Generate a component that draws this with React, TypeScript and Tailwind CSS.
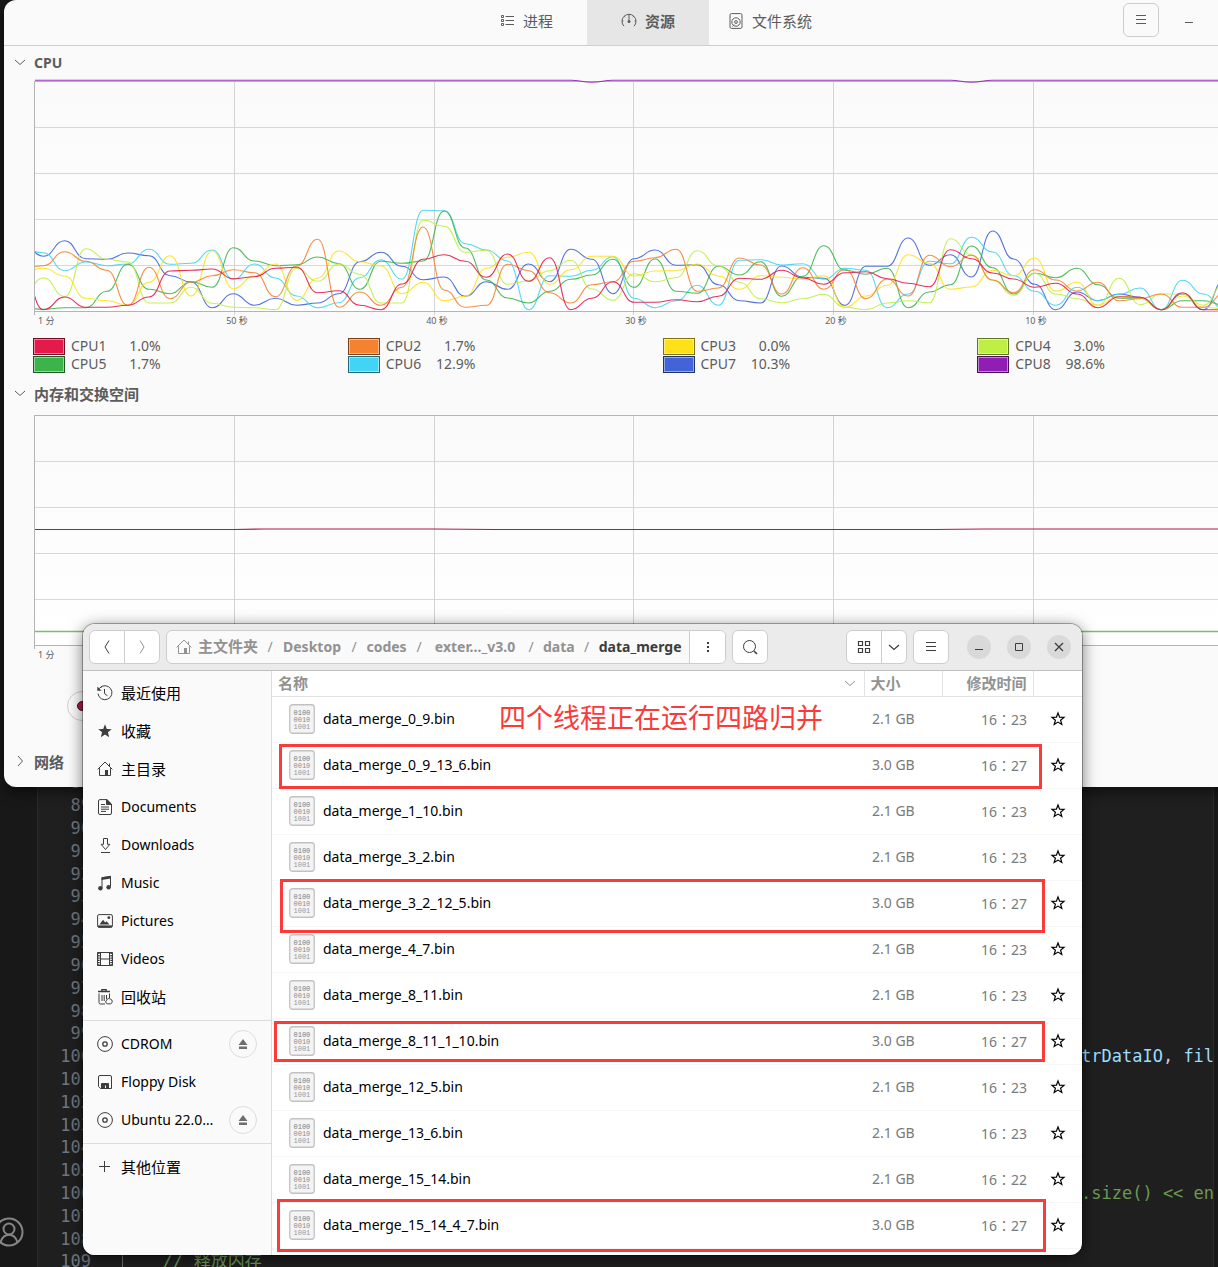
import React from 'react';

const LATIN = "font-['Noto_Sans','Noto_Sans_CJK_SC',sans-serif]";
const MONO = "font-['DejaVu_Sans_Mono','Noto_Sans_CJK_SC',monospace]";

type Series = { name: string; value: string; color: string; edge: string; points: number[] };

/* Heights are in thirds of a pixel, measured downwards; 394 is the zero line. */
const SERIES: Series[] = [
  {
    name: 'CPU1', value: '1.0%', color: '#e6194b', edge: '#730c25',
    points: [270, 389, 351, 382, 382, 376, 351, 273, 271, 267, 296, 290, 265, 262, 338, 332, 376, 389, 312, 238, 224, 244, 292, 222, 304, 233, 389, 355, 305, 367, 367, 359, 365, 349, 295, 298, 271, 294, 313, 278, 275, 296, 310, 320, 209, 236, 279, 297, 322, 310, 342, 383, 350, 352, 389, 338, 389, 389],
  },
  {
    name: 'CPU2', value: '1.7%', color: '#f58231', edge: '#7a4118',
    points: [265, 257, 215, 244, 271, 376, 262, 356, 307, 287, 269, 278, 350, 258, 178, 382, 336, 376, 322, 141, 330, 382, 376, 253, 272, 338, 369, 314, 305, 244, 233, 208, 334, 324, 234, 255, 342, 263, 328, 268, 356, 297, 348, 226, 260, 226, 300, 338, 269, 300, 333, 307, 362, 356, 342, 382, 382, 340],
  },
  {
    name: 'CPU3', value: '0.0%', color: '#ffe119', edge: '#80700c',
    points: [275, 265, 288, 355, 362, 376, 307, 227, 348, 213, 326, 288, 252, 361, 294, 213, 245, 258, 341, 307, 362, 349, 265, 232, 217, 313, 269, 229, 229, 288, 273, 272, 252, 288, 328, 287, 292, 298, 287, 382, 348, 316, 224, 250, 328, 321, 271, 287, 234, 334, 307, 376, 348, 355, 389, 348, 382, 386],
  },
  {
    name: 'CPU4', value: '3.0%', color: '#bfef45', edge: '#5f7722',
    points: [350, 293, 350, 206, 238, 246, 369, 369, 322, 370, 382, 383, 389, 265, 304, 252, 283, 369, 369, 120, 139, 217, 211, 313, 302, 272, 241, 327, 361, 281, 305, 293, 212, 258, 307, 356, 368, 356, 343, 382, 389, 369, 362, 368, 176, 224, 300, 346, 280, 342, 356, 376, 295, 374, 342, 342, 376, 310],
  },
  {
    name: 'CPU5', value: '1.7%', color: '#3cb44b', edge: '#1e5a25',
    points: [384, 388, 383, 383, 334, 253, 328, 341, 305, 322, 203, 243, 257, 254, 231, 251, 328, 244, 250, 243, 93, 204, 300, 354, 369, 334, 298, 285, 238, 322, 237, 334, 340, 259, 285, 245, 349, 289, 197, 271, 283, 265, 383, 336, 314, 198, 263, 342, 280, 293, 265, 314, 355, 355, 389, 362, 362, 376],
  },
  {
    name: 'CPU6', value: '12.9%', color: '#42d4f4', edge: '#216a7a',
    points: [208, 218, 272, 246, 257, 252, 208, 253, 250, 210, 298, 252, 294, 348, 383, 368, 293, 239, 298, 91, 92, 191, 210, 243, 389, 287, 289, 271, 230, 355, 383, 362, 316, 376, 241, 239, 255, 251, 298, 265, 271, 383, 342, 244, 251, 172, 216, 287, 334, 376, 322, 362, 343, 324, 389, 301, 342, 389],
  },
  {
    name: 'CPU7', value: '10.3%', color: '#4363d8', edge: '#21316c',
    points: [190, 229, 182, 236, 238, 219, 227, 287, 306, 383, 341, 376, 355, 376, 369, 341, 245, 217, 259, 299, 291, 349, 305, 328, 252, 305, 208, 238, 341, 236, 210, 256, 254, 314, 362, 369, 258, 292, 295, 376, 259, 259, 174, 256, 224, 291, 153, 237, 313, 389, 336, 362, 342, 352, 389, 342, 389, 300],
  },
  {
    name: 'CPU8', value: '98.6%', color: '#911eb4', edge: '#480f5a',
    points: Array.from({ length: 58 }, (_, i) => (i === 27 || i === 45 ? -293 : -299)),
  },
];

const STEP = 21.09;

function curve(points: number[]): string {
  const at = (i: number) => [i * STEP - 11.6, points[i] / 3 + 101];
  let d = '';
  points.forEach((_, i) => {
    const [x, y] = at(i);
    if (i === 0) {
      d = `M${x.toFixed(1)} ${y.toFixed(1)}`;
      return;
    }
    const [px, py] = at(i - 1);
    const mid = ((px + x) / 2).toFixed(1);
    d += ` C${mid} ${py.toFixed(1)} ${mid} ${y.toFixed(1)} ${x.toFixed(1)} ${y.toFixed(1)}`;
  });
  return d;
}

const TICKS = ['50 秒', '40 秒', '30 秒', '20 秒', '10 秒'];
const TICK_X = [200, 400, 599, 799, 999];

function Chart({ id, label, ticks = [], children }: { id: string; label: string; ticks?: string[]; children: React.ReactNode }) {
  return (
    <svg width="1230" height="252" viewBox="0 0 1230 252" role="img" aria-label={label} className="block shrink-0">
      <defs>
        <linearGradient id={`${id}-bg`} x1="0" y1="0" x2="0" y2="1">
          <stop offset="0" stopColor="#fafafa" />
          <stop offset="1" stopColor="#ffffff" />
        </linearGradient>
        <clipPath id={`${id}-clip`}>
          <rect x="1" y="0" width="1229" height="234" />
        </clipPath>
      </defs>
      <rect x="0" y="2" width="1230" height="230" fill={`url(#${id}-bg)`} />
      <g fill="none" strokeWidth="1" shapeRendering="crispEdges">
        {[48, 94, 140, 186].map((y) => (
          <path key={y} d={`M0 ${y + 0.5}H1230`} stroke="#d8d8d8" />
        ))}
        {TICK_X.map((x) => (
          <path key={x} d={`M${x + 0.5} 2V236`} stroke="#d4d4d4" />
        ))}
        <path d="M1230 2.5H0.5V236M0 232.5H1230" stroke="#b4b4b7" />
      </g>
      <g clipPath={`url(#${id}-clip)`} fill="none" strokeWidth="1.1">
        {children}
      </g>
      <g className={LATIN} fontSize="9" fill="#5f5f5f">
        <text x="4" y="245">1 分</text>
        {ticks.map((t, i) => (
          <text key={t} x={TICK_X[i] + 3} y="245" textAnchor="middle">{t}</text>
        ))}
      </g>
    </svg>
  );
}

function Icon({ children, size = 16, className = '' }: { children: React.ReactNode; size?: number; className?: string }) {
  return (
    <svg width={size} height={size} viewBox="0 0 16 16" fill="none" stroke="currentColor" strokeWidth="1" aria-hidden="true" className={`shrink-0 ${className}`}>
      {children}
    </svg>
  );
}

const HomeShape = () => (
  <>
    <path d="M.6 8.4 8 1l7.4 7.4M12.5 2.5v2.8M2.5 7.2v7.3h11V7.2" />
    <path d="M8 9h3v6H8z" fill="currentColor" stroke="none" />
  </>
);

const DiscShape = () => (
  <>
    <circle cx="8" cy="8" r="7.4" />
    <circle cx="8" cy="8" r="2.2" strokeWidth="1.3" />
  </>
);

const PLACES: { name: string; cjk?: boolean; icon: React.ReactNode }[] = [
  {
    name: '最近使用', cjk: true,
    icon: (
      <>
        <path d="M2.6 3.2A7 7 0 1 1 1 8.6M7.5 4v4.6l3 2.2" />
        <path d="M.3 1.6v4.2h4.3z" fill="currentColor" stroke="none" />
        <path d="M5 1.7c-1 .4-1.8.9-2.6 1.7" strokeDasharray="1 1" />
      </>
    ),
  },
  {
    name: '收藏', cjk: true,
    icon: <path d="m8 1.2 1.8 4.7 5 .3-3.9 3.1 1.3 4.9L8 11.5l-4.2 2.7 1.3-4.9-3.9-3.1 5-.3z" fill="currentColor" stroke="none" />,
  },
  { name: '主目录', cjk: true, icon: <HomeShape /> },
  {
    name: 'Documents',
    icon: (
      <>
        <path d="M10 .6H3A1.5 1.5 0 0 0 1.5 2v12A1.5 1.5 0 0 0 3 15.5h10a1.5 1.5 0 0 0 1.5-1.5V5z" />
        <path d="M9.5.6V5.5h5z" fill="currentColor" />
        <path d="M4 5.5h4M4 8h8M4 10.2h8M4 12.4h5" />
      </>
    ),
  },
  {
    name: 'Downloads',
    icon: <path d="M6.5 1.5h4v5.8h2.4L8.5 12.5 4.1 7.3h2.4zM4 15.5h9" />,
  },
  {
    name: 'Music',
    icon: (
      <>
        <path d="M5 13V2.8L13.5 1.5V11.5" />
        <path d="M4.5 2.3 14 .8v2.8L4.5 5z" fill="currentColor" stroke="none" />
        <circle cx="3.4" cy="13.2" r="2.2" fill="currentColor" stroke="none" />
        <circle cx="11.6" cy="12.2" r="2.2" fill="currentColor" stroke="none" />
      </>
    ),
  },
  {
    name: 'Pictures',
    icon: (
      <>
        <rect x=".6" y="1.6" width="14.8" height="12.8" rx="1.5" />
        <path d="m2.5 11.5 3.5-4.8 2.2 2.8 1.3-1.3 3 3.3z" fill="currentColor" stroke="none" />
        <path d="M1 13.3h14" strokeWidth="1.8" />
        <circle cx="11.8" cy="4.7" r="1.4" fill="currentColor" stroke="none" />
      </>
    ),
  },
  {
    name: 'Videos',
    icon: (
      <>
        <path d="M1.5 1.8v12.7M14.5 1.8v12.7" strokeWidth="2.4" strokeDasharray="1.3 1" />
        <path d="M.5 1.5h15v13H.5zM3.5 1.5v13M12.5 1.5v13M3.5 8h9" />
      </>
    ),
  },
  {
    name: '回收站', cjk: true,
    icon: (
      <>
        <path d="M1 2.5h12M5 2V.6h4V2" strokeWidth="1.5" />
        <path d="M2 4.5v9A1.5 1.5 0 0 0 3.5 15H8M12.5 4.5V9M5 6v6M7.2 6v6M9.5 6v4" />
        <path d="M10.5 14.8a2 2 0 0 1-.6-3.8 2 2 0 0 1 3.3-1 2.5 2.5 0 0 1 .4 4.8z" />
      </>
    ),
  },
];

const DEVICES = [
  { name: 'CDROM', eject: true, disc: true },
  { name: 'Floppy Disk', eject: false, disc: false },
  { name: 'Ubuntu 22.0…', eject: true, disc: true },
];

const FILES = [
  { name: 'data_merge_0_9.bin', size: '2.1 GB', hour: '16', minute: '23' },
  { name: 'data_merge_0_9_13_6.bin', size: '3.0 GB', hour: '16', minute: '27' },
  { name: 'data_merge_1_10.bin', size: '2.1 GB', hour: '16', minute: '23' },
  { name: 'data_merge_3_2.bin', size: '2.1 GB', hour: '16', minute: '23' },
  { name: 'data_merge_3_2_12_5.bin', size: '3.0 GB', hour: '16', minute: '27' },
  { name: 'data_merge_4_7.bin', size: '2.1 GB', hour: '16', minute: '23' },
  { name: 'data_merge_8_11.bin', size: '2.1 GB', hour: '16', minute: '23' },
  { name: 'data_merge_8_11_1_10.bin', size: '3.0 GB', hour: '16', minute: '27' },
  { name: 'data_merge_12_5.bin', size: '2.1 GB', hour: '16', minute: '23' },
  { name: 'data_merge_13_6.bin', size: '2.1 GB', hour: '16', minute: '23' },
  { name: 'data_merge_15_14.bin', size: '2.1 GB', hour: '16', minute: '22' },
  { name: 'data_merge_15_14_4_7.bin', size: '3.0 GB', hour: '16', minute: '27' },
];

const CRUMBS = [
  { name: 'Desktop', width: 'min-w-[60px]' },
  { name: 'codes', width: 'min-w-[41px]' },
  { name: 'exter…_v3.0', width: 'min-w-[88px]' },
  { name: 'data', width: 'min-w-[31px]' },
];

const LINES = Array.from({ length: 22 }, (_, i) => 88 + i);

function Editor() {
  return (
    <div className="flex h-full bg-[#1f1f1f]">
      <div className="flex w-[38px] shrink-0 flex-col items-start justify-end border-r border-[#2b2b2b] bg-[#181818] pb-5">
        <svg width="24" height="30" viewBox="-15 -15 24 30" fill="none" stroke="#868686" strokeWidth="2" aria-hidden="true">
          <circle cx="-6" cy="0" r="13.5" />
          <circle cx="-6" cy="-3" r="5.5" />
          <path d="M-14.500 10.5C-13 5.5-10 2.8-6 2.8S1 5.5 2.5 10.5" />
        </svg>
      </div>
      <div className="flex min-w-0 flex-1 flex-col justify-end overflow-hidden">
        <div className={`-mb-[6px] flex h-[502px] flex-col text-[17px] leading-[22px] whitespace-pre ${MONO}`}>
          {LINES.map((n) => (
            <div key={n} className="flex min-h-0 flex-1 items-center">
              <span className="w-[53px] shrink-0 text-right text-[#6e7681]">{n}</span>
              {n === 100 && <span className="pl-[990px] text-[#9cdcfe]">trDataIO<span className="text-[#cccccc]">, </span>fil</span>}
              {n === 106 && <span className="pl-[990px] text-[#6a9955]">.size() &lt;&lt; en</span>}
              {n === 109 && (
                <span className="ml-[31px] border-l border-[#707070] pl-[40px] text-[#6a9955]">
                  <i>// </i><span className="text-[17px]">释放内存</span>
                </span>
              )}
            </div>
          ))}
        </div>
      </div>
      <div className="w-[5px] shrink-0 border-l border-[#2a2a2a] bg-[#181818]" />
    </div>
  );
}

function Heading({ children, open = true, cjk = true }: { children: React.ReactNode; open?: boolean; cjk?: boolean }) {
  return (
    <button type="button" className={`flex h-6 items-center gap-2 pl-2 font-bold text-[#5c5c5c] ${cjk ? 'text-[15px]' : 'text-sm'}`}>
      <Icon className="-translate-y-px text-[#5c5c5c]">{open ? <path d="m3 6 5 4.500L13 6" /> : <path d="m6 3 4.500 5L6 13" />}</Icon>
      <span className="-ml-0.5">{children}</span>
    </button>
  );
}

function Tab({ label, active, children }: { label: string; active?: boolean; children: React.ReactNode }) {
  return (
    <button
      type="button"
      role="tab"
      aria-selected={!!active}
      className={`flex w-[122px] items-center justify-center gap-2 pb-0.5 text-[15px] text-[#5c5c5c] ${active ? 'bg-[#e6e6e6] font-bold' : ''}`}
    >
      <Icon className="-translate-y-px">{children}</Icon>
      {label}
    </button>
  );
}

function Monitor() {
  return (
    <section aria-label="System monitor" className="absolute top-0 -right-[74px] left-1 h-[787px] overflow-hidden rounded-xl bg-[#fafafa] shadow-[0_4px_14px_rgba(0,0,0,0.6)]">
      <header className="flex h-[46px] border-b border-[#cfcfcf]">
        <div className="flex-1 pl-[11px]" />
        <div role="tablist" className="flex">
          <Tab label="进程">
            <path d="M2.5 2.5h2v2h-2zM2.5 6.5h2v2h-2zM2.5 10.5h2v2h-2zM6.5 3.5H15M6.5 7.5H15M6.5 11.5H15" />
          </Tab>
          <Tab label="资源" active>
            <path d="M3 13.2A7 7 0 1 1 13 13.2" />
            <path d="M8 1v7M3.200 3.200l1 1M12.8 3.200l-1 1M1 8h1.400M15 8h-1.400" />
            <circle cx="8" cy="8.500" r="1.500" fill="currentColor" stroke="none" />
          </Tab>
          <Tab label="文件系统">
            <rect x="2" y=".6" width="12" height="14.8" rx="1.5" />
            <circle cx="8" cy="9" r="4.2" />
            <circle cx="8" cy="9" r="1.4" />
            <path d="m4.500 13.500 1.800-1.800" />
          </Tab>
        </div>
        <div className="flex flex-1 items-center justify-end gap-4 pr-[11px] pb-[6px] text-[#5c5c5c]">
          <button type="button" aria-label="Menu" className="mr-0.5 flex h-[34px] w-9 items-center justify-center rounded-md border border-[#cdcdcd]">
            <Icon><path d="M3 3.5h10M3 7.5h10M3 11.5h10" /></Icon>
          </button>
          <button type="button" aria-label="Minimize" className="flex size-6 items-center justify-center pt-1">
            <Icon><path d="M4 8.5h8" /></Icon>
          </button>
          <button type="button" aria-label="Maximize" className="size-6" />
          <button type="button" aria-label="Close" className="size-6" />
        </div>
      </header>
      <div className="pt-[5px]"><Heading cjk={false}>CPU</Heading></div>
      <div className="mt-1 pl-[30px]">
        <Chart id="cpu" label="CPU history" ticks={TICKS}>
          {SERIES.slice().reverse().map((s) => (
            <path key={s.name} d={curve(s.points)} stroke={s.color} strokeOpacity="0.9" />
          ))}
        </Chart>
      </div>
      <dl className="mt-1.5 grid grid-cols-4 pl-[29px] text-sm leading-[18px] text-[#5c5c5c]">
        {SERIES.map((s) => (
          <div key={s.name} className="flex h-[18px] items-center">
            <dt className="flex items-center gap-1.5">
              <span className="h-[17px] w-8 border p-px" style={{ borderColor: s.edge }}>
                <span className="block h-full outline" style={{ background: s.color, outlineColor: `color-mix(in srgb, ${s.color} 55%, white)` }} />
              </span>
              {s.name}
            </dt>
            <dd className="w-[54px] text-right">{s.value}</dd>
          </div>
        ))}
      </dl>
      <div className="mt-[9px]"><Heading>内存和交换空间</Heading></div>
      <div className="mt-[7px] pl-[30px]">
        <Chart id="mem" label="Memory history">
          <path d="M0 116.500H200L230 116H400L460 116.500H900L950 116H1230" stroke="#ab1852" />
          <path d="M0 218.500H1230" stroke="#79c06a" strokeWidth="1.500" />
        </Chart>
      </div>
      <div className="mt-[26px] ml-[63px] flex size-[30px] items-center justify-center rounded-full border border-[#cfcfcf]">
        <span className="size-2.5 rounded-full border border-[#4a0a25] bg-[#ab1852]" />
      </div>
      <div className="mt-[29px]"><Heading open={false}>网络</Heading></div>
    </section>
  );
}

const WIN_BTN = 'flex size-6 items-center justify-center rounded-full bg-[#d9d9d9] text-[#3d3d3d]';
const BOX = 'pointer-events-none absolute border-[3px] border-[#fb3a3a]';

function Files() {
  return (
    <section aria-label="Files" className="absolute top-[624px] right-[136px] left-[83px] flex h-[631px] flex-col overflow-hidden rounded-xl bg-white shadow-[0_0_0_1px_rgba(0,0,0,0.3),0_3px_16px_rgba(0,0,0,0.55)]">
      <header className="flex h-[47px] shrink-0 items-center border-b border-[#c0c0c0] bg-[#ebebeb] px-1.5 text-[#3d3d3d]">
        <div className="flex h-[34px] w-[71px] shrink-0 overflow-hidden rounded-md border border-[#cdcdcd] bg-white">
          <button type="button" aria-label="Back" className="flex flex-1 items-center justify-center border-r border-[#cdcdcd]">
            <Icon><path d="M10 1.5 6 8l4 6.5" /></Icon>
          </button>
          <button type="button" aria-label="Forward" className="flex flex-1 items-center justify-center text-[#929292]">
            <Icon><path d="m6 1.5 4 6.5-4 6.5" /></Icon>
          </button>
        </div>
        <nav aria-label="Path" className="ml-1.5 flex h-[34px] w-[560px] shrink-0 items-center overflow-hidden rounded-md border border-[#cdcdcd] bg-[#fafafa] pl-[9px] text-sm font-bold text-[#929292]">
          <a href="#home" className="flex items-center gap-1.5"><Icon><HomeShape /></Icon><span className="text-[15px]">主文件夹</span></a>
          {CRUMBS.map((c) => (
            <React.Fragment key={c.name}>
              <span className="w-6 shrink-0 text-center font-normal">/</span>
              <a href={`#${c.name}`} className={`text-center ${c.width}`}>{c.name}</a>
            </React.Fragment>
          ))}
          <span className="w-6 shrink-0 text-center font-normal">/</span>
          <a href="#data_merge" className="text-[#3d3d3d]">data_merge</a>
          <button type="button" aria-label="More" className="ml-auto flex h-full w-9 items-center justify-center border-l border-[#cdcdcd] bg-white text-[#3d3d3d]">
            <Icon><path d="M7 3h2v2H7zM7 7h2v2H7zM7 11h2v2H7z" fill="currentColor" stroke="none" /></Icon>
          </button>
        </nav>
        <button type="button" aria-label="Search" className="ml-1.5 flex h-[34px] w-9 shrink-0 items-center justify-center rounded-md border border-[#cdcdcd] bg-white">
          <Icon><circle cx="7.5" cy="7.5" r="6" /><path d="m12 12 3 3" strokeWidth="1.6" /></Icon>
        </button>
        <div className="flex-1" />
        <div className="flex h-[34px] w-[61px] shrink-0 overflow-hidden rounded-md border border-[#cdcdcd] bg-white">
          <button type="button" aria-label="Grid view" className="flex w-[35px] items-center justify-center border-r border-[#cdcdcd]">
            <Icon><path d="M2.5 2.5h4v4h-4zM9.5 2.5h4v4h-4zM2.5 9.5h4v4h-4zM9.5 9.5h4v4h-4z" strokeWidth="1.2" /></Icon>
          </button>
          <button type="button" aria-label="View options" className="flex flex-1 items-center justify-center">
            <Icon><path d="m3 6 5 4.500L13 6" strokeWidth="1.2" /></Icon>
          </button>
        </div>
        <button type="button" aria-label="Menu" className="ml-1.5 flex h-[34px] w-9 shrink-0 items-center justify-center rounded-md border border-[#cdcdcd] bg-white">
          <Icon><path d="M3 3.5h10M3 7.5h10M3 11.5h10" /></Icon>
        </button>
        <div className="mr-[5px] ml-[18px] flex shrink-0 gap-4">
          <button type="button" aria-label="Minimize" className={WIN_BTN}><Icon><path d="M4 10.5h8" /></Icon></button>
          <button type="button" aria-label="Maximize" className={WIN_BTN}><Icon><path d="M4.5 4.5h7v7h-7z" /></Icon></button>
          <button type="button" aria-label="Close" className={WIN_BTN}><Icon><path d="m4 4 8 8M12 4l-8 8" strokeWidth="1.3" /></Icon></button>
        </div>
      </header>
      <div className="flex min-h-0 flex-1">
        <aside className="w-[189px] shrink-0 border-r border-[#dcdcdc] bg-[#fafafa] pt-[3px] text-sm text-black">
          {PLACES.map((p) => (
            <a key={p.name} href={`#${p.name}`} className="flex h-[38px] items-center gap-2 pl-3.5">
              <Icon className="text-[#3d3d3d]">{p.icon}</Icon>
              <span className={p.cjk ? 'pt-0.5 text-[15px]' : ''}>{p.name}</span>
            </a>
          ))}
          <div className="my-1 h-px bg-[#dcdcdc]" />
          {DEVICES.map((d) => (
            <div key={d.name} className="flex h-[38px] items-center pr-3.5 pl-3.5">
              <a href={`#${d.name}`} className="flex flex-1 items-center gap-2 whitespace-nowrap">
                <Icon className="text-[#3d3d3d]">
                  {d.disc ? <DiscShape /> : (
                    <>
                      <path d="M3 1.5h10A1.5 1.5 0 0 1 14.5 3v11.5H3.5l-2-2V3A1.5 1.5 0 0 1 3 1.5z" />
                      <path d="M4.5 14V9.5h7V14H9.5v-3h-2v3z" fill="currentColor" />
                    </>
                  )}
                </Icon>
                {d.name}
              </a>
              {d.eject && (
                <button type="button" aria-label={`Eject ${d.name}`} className="flex size-7 shrink-0 items-center justify-center rounded-full border border-[#dcdcdc] text-[#6e6e6e]">
                  <Icon><path d="m8 3 4.500 6h-9zM4 10.500h8V13H4z" fill="currentColor" stroke="none" /></Icon>
                </button>
              )}
            </div>
          ))}
          <div className="my-1 h-px bg-[#dcdcdc]" />
          <a href="#other" className="flex h-[38px] items-center gap-2 pl-3.5">
            <Icon className="text-[#3d3d3d]"><path d="M2 7.5h11M7.5 2v11" /></Icon>
            <span className="pt-0.5 text-[15px]">其他位置</span>
          </a>
        </aside>
        <div className="min-w-0 flex-1">
          <table className="w-full table-fixed border-collapse text-left text-sm">
            <colgroup>
              <col />
              <col className="w-[78px]" />
              <col className="w-[91px]" />
              <col className="w-[49px]" />
            </colgroup>
            <thead>
              <tr className="h-[25px] border-b border-[#e2e2e2] text-[15px] leading-6 text-[#929292]">
                <th scope="col" className="border-r border-[#e2e2e2] py-0 pr-1.5 pl-1.5 font-bold">
                  <span className="flex items-center justify-between">名称<Icon><path d="m3 6 5 4.500L13 6" /></Icon></span>
                </th>
                <th scope="col" className="border-r border-[#e2e2e2] py-0 pl-1.5 font-bold">大小</th>
                <th scope="col" className="border-r border-[#e2e2e2] py-0 pr-1.5 text-right font-bold">修改时间</th>
                <td />
              </tr>
            </thead>
            <tbody>
              {FILES.map((f) => (
                <tr key={f.name} className="h-[46px] border-b border-[#f6f6f6]">
                  <td className="p-0 pl-[17px] text-black">
                    <span className="flex items-center gap-2">
                      <svg width="26" height="30" viewBox="0 0 26 30" aria-hidden="true" className="shrink-0">
                        <rect x=".75" y=".75" width="24.5" height="28.5" rx="2.8" fill="#f4f4f4" stroke="#c2c2c2" strokeWidth="1.3" />
                        <g className="font-['Liberation_Mono',monospace]" fontSize="7" fill="#7c7c7c">
                          <text x="4.5" y="11">0100</text>
                          <text x="4.5" y="18" fill="#8c8c8c">0010</text>
                          <text x="4.5" y="25" fill="#989898">1001</text>
                        </g>
                      </svg>
                      {f.name}
                    </span>
                  </td>
                  <td className="p-0 pl-2 text-[#7a7a7a]">{f.size}</td>
                  <td className="p-0 pr-1.5 text-right text-[#7a7a7a]">
                    {f.hour}<span className="font-['Noto_Sans_CJK_TC',sans-serif]">：</span>{f.minute}
                  </td>
                  <td className="p-0">
                    <button type="button" aria-label={`Star ${f.name}`} className="mx-auto flex size-6 items-center justify-center text-black">
                      <Icon><path d="m8 2 1.6 4.2 4.4.2-3.4 2.8 1.2 4.3L8 11.1l-3.8 2.4 1.2-4.3L2 6.4l4.4-.2z" strokeWidth="1.2" /></Icon>
                    </button>
                  </td>
                </tr>
              ))}
            </tbody>
          </table>
        </div>
      </div>
      <p className="pointer-events-none absolute top-[74px] left-[416px] text-[27px] leading-10 whitespace-nowrap text-[#fb3a3a]">四个线程正在运行四路归并</p>
      <div className={`${BOX} top-[120px] right-[40px] left-[196px] h-[45px]`} />
      <div className={`${BOX} top-[255px] right-[37px] left-[197px] h-[54px]`} />
      <div className={`${BOX} top-[397px] right-[37px] left-[191px] h-[41px]`} />
      <div className={`${BOX} top-[575px] right-[36px] left-[194px] h-[53px]`} />
    </section>
  );
}

export default function App() {
  return (
    <main className={`relative h-screen overflow-hidden bg-[#181818] ${LATIN}`}>
      <Editor />
      <Monitor />
      <Files />
    </main>
  );
}
